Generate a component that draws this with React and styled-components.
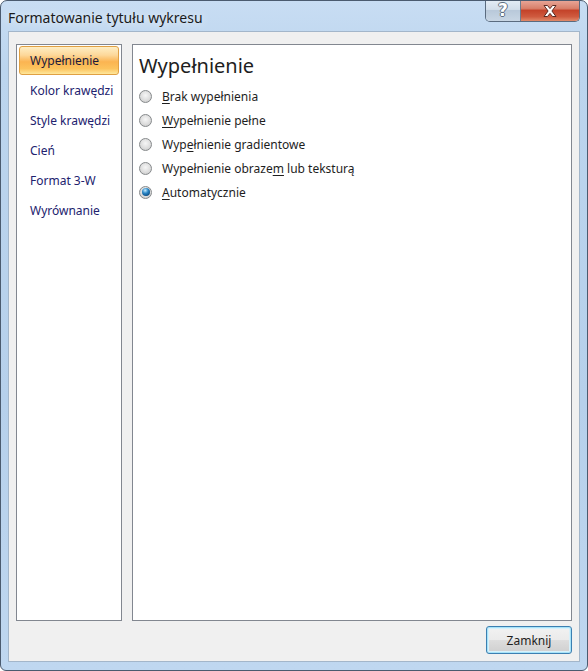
import React from 'react';
import styled, { createGlobalStyle } from 'styled-components';

const GlobalStyle = createGlobalStyle`
  html, body {
    margin: 0;
    padding: 0;
    background: #ffffff;
  }
  * {
    box-sizing: border-box;
  }
`

const UI_FONT = `"Noto Sans", "Open Sans", "DejaVu Sans", sans-serif`;

const Window = styled.div`
  width: 588px;
  height: 671px;
  display: flex;
  flex-direction: column;
  padding: 0 7px 8px 7px;
  border: 1px solid #4b5b6f;
  border-radius: 7px 7px 6px 6px;
  background: linear-gradient(to bottom, #c8ddf3 0%, #bcd5ee 10%, #b6d0eb 60%, #bfd7f0 100%);
  font-family: ${UI_FONT};
  overflow: hidden;
`

const TitleBar = styled.div`
  height: 30px;
  display: flex;
  align-items: center;
  position: relative;
`

const Title = styled.div`
  font-size: 14px;
  color: #1b1b1b;
  padding-top: 3px;
  text-shadow: 0 0 8px rgba(255, 255, 255, 0.9);
`

const CaptionButtons = styled.div`
  margin-left: auto;
  align-self: flex-start;
  margin-top: -1px;
  display: flex;
  border: 1px solid #5a6b7f;
  border-top: none;
  border-radius: 0 0 5px 5px;
  overflow: hidden;
  height: 22px;
`

const HelpButton = styled.div`
  width: 35px;
  display: flex;
  align-items: center;
  justify-content: center;
  background: linear-gradient(to bottom, #e4edf6 0%, #d2deea 45%, #b9c9da 50%, #c8d6e4 100%);
  border-right: 1px solid #6b7c8f;
  color: #ffffff;
  font-family: "DejaVu Sans", sans-serif;
  font-weight: bold;
  font-size: 17px;
  line-height: 1;
  text-shadow: -1px 0 #5d6d80, 1px 0 #5d6d80, 0 -1px #5d6d80, 0 1px #5d6d80;
`

const CloseButton = styled.div`
  width: 58px;
  display: flex;
  align-items: center;
  justify-content: center;
  background: linear-gradient(to bottom, #e9a99b 0%, #d8806b 40%, #c4432a 50%, #cf5b3f 80%, #e08a6a 100%);
`

const Client = styled.div`
  flex: 1;
  display: flex;
  flex-direction: column;
  background: #f0f0f0;
  border: 1px solid #a3b6ca;
  padding: 12px 7px 7px 7px;
`

const Main = styled.div`
  flex: 1;
  display: flex;
  gap: 10px;
`

const NavList = styled.div`
  width: 106px;
  background: #ffffff;
  border: 1px solid #828790;
  padding: 1px 2px;
`

const NavItem = styled.div`
  height: 29px;
  margin-bottom: 1px;
  display: flex;
  align-items: center;
  padding-left: 10px;
  font-size: 12px;
  color: ${p => (p.$active ? '#1a1a3c' : '#22226e')};
  border: 1px solid ${p => (p.$active ? '#e0a043' : 'transparent')};
  border-radius: 3px;
  background: ${p =>
    p.$active
      ? 'linear-gradient(to bottom, #feeec4 0%, #fdd89a 30%, #fbb451 55%, #fcc35d 80%, #fee79c 100%)'
      : 'transparent'};
`

const Pane = styled.div`
  flex: 1;
  background: #ffffff;
  border: 1px solid #828790;
  padding: 8px 6px;
`

const Heading = styled.div`
  font-size: 20px;
  line-height: 26px;
  color: #1e1e1e;
  margin-bottom: 5px;
`

const OptionRow = styled.label`
  height: 24px;
  display: flex;
  align-items: center;
  gap: 10px;
  font-size: 12px;
  color: #1e1e1e;
`

const RadioCircle = styled.span`
  width: 13px;
  height: 13px;
  border-radius: 50%;
  border: 1px solid #86898b;
  background: radial-gradient(circle at 50% 40%, #f6f6f6 0%, #e0e0e0 50%, #c4c4c4 100%);
  display: flex;
  align-items: center;
  justify-content: center;
  flex-shrink: 0;

  &::after {
    content: '';
    display: ${p => (p.$checked ? 'block' : 'none')};
    width: 8px;
    height: 8px;
    border-radius: 50%;
    background: radial-gradient(circle at 40% 30%, #c6ecff 0%, #2a86c6 40%, #0b4a80 80%, #08355e 100%);
  }
`

const Key = styled.span`
  text-decoration: underline;
  text-underline-offset: 2px;
`

const Footer = styled.div`
  display: flex;
  justify-content: flex-end;
  margin-top: 5px;
`

const Button = styled.button`
  width: 86px;
  height: 28px;
  font-family: ${UI_FONT};
  font-size: 12px;
  color: #1e1e1e;
  border: 1px solid #3c7fb1;
  border-radius: 3px;
  box-shadow: inset 0 0 0 1px #a7e3f9, inset 0 0 0 2px #d8f1fb;
  background: linear-gradient(to bottom, #f2f2f2 0%, #ebebeb 48%, #dddddd 52%, #cfcfcf 100%);
  padding: 0;
  cursor: default;
`

const navItems = [
  'Wypełnienie',
  'Kolor krawędzi',
  'Style krawędzi',
  'Cień',
  'Format 3-W',
  'Wyrównanie',
];

function CloseGlyph() {
  return (
    <svg width="16" height="14" viewBox="0 0 16 14">
      <path
        d="M2 1.5 L5.5 1.5 L8 4.6 L10.5 1.5 L14 1.5 L9.9 7 L14 12.5 L10.5 12.5 L8 9.4 L5.5 12.5 L2 12.5 L6.1 7 Z"
        fill="#ffffff"
        stroke="#5b2a22"
        strokeWidth="1"
        strokeLinejoin="round"
      />
    </svg>
  );
}

function App() {
  return (
    <>
      <GlobalStyle />
      <Window>
        <TitleBar>
          <Title>Formatowanie tytułu wykresu</Title>
          <CaptionButtons>
            <HelpButton>?</HelpButton>
            <CloseButton>
              <CloseGlyph />
            </CloseButton>
          </CaptionButtons>
        </TitleBar>
        <Client>
          <Main>
            <NavList>
              {navItems.map((item, i) => (
                <NavItem key={item} $active={i === 0}>{item}</NavItem>
              ))}
            </NavList>
            <Pane>
              <Heading>Wypełnienie</Heading>
              <OptionRow>
                <RadioCircle />
                <span><Key>B</Key>rak wypełnienia</span>
              </OptionRow>
              <OptionRow>
                <RadioCircle />
                <span><Key>W</Key>ypełnienie pełne</span>
              </OptionRow>
              <OptionRow>
                <RadioCircle />
                <span>Wyp<Key>e</Key>łnienie gradientowe</span>
              </OptionRow>
              <OptionRow>
                <RadioCircle />
                <span>Wypełnienie obraze<Key>m</Key> lub teksturą</span>
              </OptionRow>
              <OptionRow>
                <RadioCircle $checked />
                <span><Key>A</Key>utomatycznie</span>
              </OptionRow>
            </Pane>
          </Main>
          <Footer>
            <Button>Zamknij</Button>
          </Footer>
        </Client>
      </Window>
    </>
  );
}

export default App;
